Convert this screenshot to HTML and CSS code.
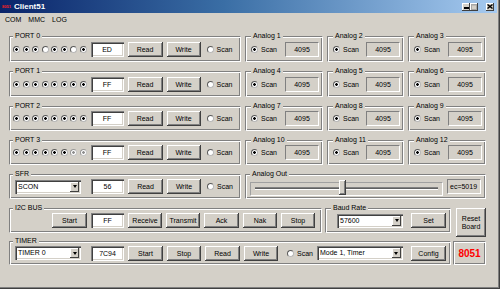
FILE: index.html
```html
<!DOCTYPE html>
<html lang="en">
<head>
  <meta charset="UTF-8">
  <title>Client51</title>
  <link rel="stylesheet" href="styles.css">
</head>
<body>
  <div class="window">
    <!-- Title bar -->
    <div class="titlebar">
      <span class="app-icon">8051</span>
      <span class="title">Client51</span>
      <div class="caption-buttons">
        <span class="cap-btn min"><svg width="5" height="2"><rect width="5" height="2" fill="#000"/></svg></span>
        <span class="cap-btn"><svg width="6" height="6"><rect x="0.5" y="0.5" width="5" height="5" fill="none" stroke="#a8a8a8"/><rect x="0" y="0" width="6" height="1.5" fill="#a8a8a8"/></svg></span>
        <span class="cap-btn close"><svg width="6" height="5"><path d="M0.5 0.5L5.5 4.5M5.5 0.5L0.5 4.5" stroke="#000" stroke-width="1.4"/></svg></span>
      </div>
    </div>

    <!-- Menu -->
    <div class="menubar">
      <span>COM</span>
      <span>MMC</span>
      <span>LOG</span>
    </div>

    <div class="client">
      <!-- PORT 0 -->
      <div class="row h26">
        <div class="group port">
          <div class="legend">PORT 0</div>
          <div class="controls">
            <div class="bits">
              <span class="radio on"></span><span class="radio on"></span><span class="radio on"></span><span class="radio"></span>
              <span class="radio on"></span><span class="radio on"></span><span class="radio"></span><span class="radio on"></span>
            </div>
            <span class="edit">ED</span>
            <button class="btn w35">Read</button>
            <button class="btn w34">Write</button>
            <span class="scan"><span class="radio"></span>Scan</span>
          </div>
        </div>
        <div class="group analog w78">
          <div class="legend">Analog 1</div>
          <div class="controls">
            <span class="scan"><span class="radio on"></span>Scan</span>
            <span class="value">4095</span>
          </div>
        </div>
        <div class="group analog w77">
          <div class="legend">Analog 2</div>
          <div class="controls">
            <span class="scan"><span class="radio on"></span>Scan</span>
            <span class="value">4095</span>
          </div>
        </div>
        <div class="group analog w78">
          <div class="legend">Analog 3</div>
          <div class="controls">
            <span class="scan"><span class="radio on"></span>Scan</span>
            <span class="value">4095</span>
          </div>
        </div>
      </div>

      <!-- PORT 1 -->
      <div class="row h26">
        <div class="group port">
          <div class="legend">PORT 1</div>
          <div class="controls">
            <div class="bits">
              <span class="radio on"></span><span class="radio on"></span><span class="radio on"></span><span class="radio on"></span>
              <span class="radio on"></span><span class="radio on"></span><span class="radio on"></span><span class="radio on"></span>
            </div>
            <span class="edit">FF</span>
            <button class="btn w35">Read</button>
            <button class="btn w34">Write</button>
            <span class="scan"><span class="radio"></span>Scan</span>
          </div>
        </div>
        <div class="group analog w78">
          <div class="legend">Analog 4</div>
          <div class="controls">
            <span class="scan"><span class="radio on"></span>Scan</span>
            <span class="value">4095</span>
          </div>
        </div>
        <div class="group analog w77">
          <div class="legend">Analog 5</div>
          <div class="controls">
            <span class="scan"><span class="radio on"></span>Scan</span>
            <span class="value">4095</span>
          </div>
        </div>
        <div class="group analog w78">
          <div class="legend">Analog 6</div>
          <div class="controls">
            <span class="scan"><span class="radio on"></span>Scan</span>
            <span class="value">4095</span>
          </div>
        </div>
      </div>

      <!-- PORT 2 -->
      <div class="row h25">
        <div class="group port">
          <div class="legend">PORT 2</div>
          <div class="controls">
            <div class="bits">
              <span class="radio on"></span><span class="radio on"></span><span class="radio on"></span><span class="radio on"></span>
              <span class="radio on"></span><span class="radio on"></span><span class="radio on"></span><span class="radio on"></span>
            </div>
            <span class="edit">FF</span>
            <button class="btn w35">Read</button>
            <button class="btn w34">Write</button>
            <span class="scan"><span class="radio"></span>Scan</span>
          </div>
        </div>
        <div class="group analog w78">
          <div class="legend">Analog 7</div>
          <div class="controls">
            <span class="scan"><span class="radio on"></span>Scan</span>
            <span class="value">4095</span>
          </div>
        </div>
        <div class="group analog w77">
          <div class="legend">Analog 8</div>
          <div class="controls">
            <span class="scan"><span class="radio on"></span>Scan</span>
            <span class="value">4095</span>
          </div>
        </div>
        <div class="group analog w78">
          <div class="legend">Analog 9</div>
          <div class="controls">
            <span class="scan"><span class="radio on"></span>Scan</span>
            <span class="value">4095</span>
          </div>
        </div>
      </div>

      <!-- PORT 3 -->
      <div class="row h25">
        <div class="group port">
          <div class="legend">PORT 3</div>
          <div class="controls">
            <div class="bits">
              <span class="radio on"></span><span class="radio on"></span><span class="radio on"></span><span class="radio on"></span>
              <span class="radio on"></span><span class="radio on"></span><span class="radio on dim"></span><span class="radio on dim"></span>
            </div>
            <span class="edit">FF</span>
            <button class="btn w35">Read</button>
            <button class="btn w34">Write</button>
            <span class="scan"><span class="radio"></span>Scan</span>
          </div>
        </div>
        <div class="group analog w78">
          <div class="legend">Analog 10</div>
          <div class="controls">
            <span class="scan"><span class="radio on"></span>Scan</span>
            <span class="value">4095</span>
          </div>
        </div>
        <div class="group analog w77">
          <div class="legend">Analog 11</div>
          <div class="controls">
            <span class="scan"><span class="radio on"></span>Scan</span>
            <span class="value">4095</span>
          </div>
        </div>
        <div class="group analog w78">
          <div class="legend">Analog 12</div>
          <div class="controls">
            <span class="scan"><span class="radio on"></span>Scan</span>
            <span class="value">4095</span>
          </div>
        </div>
      </div>

      <!-- SFR + analog out -->
      <div class="row h25">
        <div class="group port">
          <div class="legend">SFR</div>
          <div class="controls">
            <div class="combo w66 first"><span class="combo-text">SCON</span><span class="combo-btn"></span></div>
            <span class="edit">56</span>
            <button class="btn w35">Read</button>
            <button class="btn w34">Write</button>
            <span class="scan"><span class="radio"></span>Scan</span>
          </div>
        </div>
        <div class="group analog-out">
          <div class="legend">Analog Out</div>
          <div class="controls">
            <div class="slider">
              <span class="track"></span>
              <span class="thumb" style="left: 46%"></span>
            </div>
            <span class="value left">ec=5019</span>
          </div>
        </div>
      </div>

      <!-- I2C + baud -->
      <div class="row h25">
        <div class="group i2c">
          <div class="legend">I2C BUS</div>
          <div class="controls">
            <button class="btn w35 start">Start</button>
            <span class="edit">FF</span>
            <button class="btn w34">Receive</button>
            <button class="btn w34">Transmit</button>
            <button class="btn w35">Ack</button>
            <button class="btn w34">Nak</button>
            <button class="btn w34">Stop</button>
          </div>
        </div>
        <div class="group baud">
          <div class="legend">Baud Rate</div>
          <div class="controls">
            <div class="combo w66 indent"><span class="combo-text">57600</span><span class="combo-btn"></span></div>
            <button class="btn w35 set">Set</button>
          </div>
        </div>
        <button class="btn reset">Reset<br>Board</button>
      </div>

      <!-- Timer -->
      <div class="row h24 last">
        <div class="group timer">
          <div class="legend">TIMER</div>
          <div class="controls">
            <div class="combo w66 first"><span class="combo-text">TIMER 0</span><span class="combo-btn"></span></div>
            <span class="edit">7C94</span>
            <button class="btn w35">Start</button>
            <button class="btn w34">Stop</button>
            <button class="btn w35">Read</button>
            <button class="btn w34">Write</button>
            <span class="scan wide"><span class="radio"></span>Scan</span>
            <div class="combo w86"><span class="combo-text">Mode 1, Timer</span><span class="combo-btn"></span></div>
            <button class="btn w35 set">Config</button>
          </div>
        </div>
        <div class="chip">8051</div>
      </div>
    </div>
  </div>
</body>
</html>
```

FILE: styles.css
```css
/* Reset */
* {
  margin: 0;
  padding: 0;
  box-sizing: border-box;
}

body {
  background: #d4d0c8;
  font-family: "Liberation Sans", Arial, sans-serif;
  font-size: 7px;
  color: #000;
}

/* Window frame */
.window {
  width: 500px;
  height: 289px;
  padding: 0 3px 3px 0;
  background: #d4d0c8;
  box-shadow: inset -1px -1px #404040, inset -2px -2px #808080;
  display: flex;
  flex-direction: column;
  overflow: hidden;
}

.titlebar {
  height: 13px;
  display: flex;
  align-items: center;
  padding: 0 3px 0 2px;
  background: linear-gradient(to right, #0a246a, #3a6ea5 45%, #a6caf0);
  color: #fff;
}

.app-icon {
  width: 11px;
  font-size: 4px;
  font-weight: bold;
  color: #ff2020;
}

.title {
  margin-left: 1px;
  font-size: 8px;
  font-weight: bold;
}

.caption-buttons {
  margin-left: auto;
  display: flex;
}

.cap-btn {
  width: 8px;
  height: 8px;
  display: flex;
  align-items: center;
  justify-content: center;
  background: #d4d0c8;
  box-shadow: inset -1px -1px #404040, inset 1px 1px #fff;
}

.cap-btn.min {
  align-items: flex-end;
  padding-bottom: 2px;
}

.cap-btn.close {
  margin-left: 8px;
}

.menubar {
  height: 12px;
  display: flex;
  align-items: center;
  gap: 7px;
  padding-left: 5px;
}

/* Client area */
.client {
  padding: 11px 0 0 9px;
  display: flex;
  flex-direction: column;
  gap: 9px;
}

.row {
  display: flex;
  gap: 4px;
}

.row.h26 { height: 26px; }
.row.h25 { height: 25px; }
.row.h24 { height: 24px; }
.row.last { margin-top: -1px; }

/* Etched group box */
.group {
  display: flex;
  flex-direction: column;
  border: 1px solid #808080;
  border-right-color: #fff;
  border-bottom-color: #fff;
  box-shadow: inset 1px 1px #fff, inset -1px -1px #808080;
  padding: 0 3px;
}

.legend {
  align-self: flex-start;
  margin: -5px 0 -3px;
  padding: 0 2px;
  line-height: 8px;
  background: #d4d0c8;
  white-space: nowrap;
}

.controls {
  flex: 1;
  display: flex;
  align-items: center;
  gap: 4px;
}

.port { width: 232px; }
.analog { padding: 0 3px 0 5px; }
.w78 { width: 78px; }
.w77 { width: 77px; }
.analog-out { width: 241px; padding: 0 4px; }
.i2c { width: 313px; }
.baud { width: 126px; margin-left: -1px; padding-left: 5px; }
.timer { width: 442px; }

/* Controls */
.btn {
  flex: none;
  height: 15px;
  font: inherit;
  color: #000;
  background: #d4d0c8;
  border: none;
  box-shadow: inset -1px -1px #404040, inset 1px 1px #fff, inset -2px -2px #808080;
}

.btn.w35 { width: 35px; }
.btn.w34 { width: 34px; }
.btn.start { margin-left: 39px; }
.btn.set { margin-left: 4px; }

.btn.reset {
  width: 30px;
  height: 29px;
  margin-left: 1px;
  line-height: 8px;
}

.edit {
  flex: none;
  width: 33px;
  height: 15px;
  display: flex;
  align-items: center;
  justify-content: center;
  background: #fff;
  box-shadow: inset 1px 1px #808080, inset 2px 2px #404040, inset -1px -1px #fff, inset -2px -2px #d4d0c8;
}

.value {
  flex: none;
  width: 34px;
  height: 15px;
  margin-left: auto;
  display: flex;
  align-items: center;
  justify-content: center;
  border: 1px solid;
  border-color: #808080 #fff #fff #808080;
}

.value.left {
  justify-content: flex-start;
  padding-left: 2px;
}

.bits {
  display: flex;
  gap: 2.5px;
}

.radio {
  flex: none;
  width: 7px;
  height: 7px;
  border-radius: 50%;
  background: #fff;
  border: 1px solid;
  border-color: #5a5a5a #b8b8b8 #b8b8b8 #5a5a5a;
}

.radio.on {
  background: radial-gradient(circle, #000 0 1px, #fff 1.6px);
}

.radio.on.dim {
  border-color: #9a9a9a #c8c8c8 #c8c8c8 #9a9a9a;
  background: radial-gradient(circle, #909090 0 1px, #fff 1.6px);
}

.scan {
  display: flex;
  align-items: center;
  gap: 3px;
  margin-left: 2px;
}

.analog .scan { margin-left: 0; }
.scan.wide { margin-left: 5px; }

/* Combo box */
.combo {
  flex: none;
  height: 14px;
  display: flex;
  align-items: stretch;
  padding: 2px;
  background: #fff;
  box-shadow: inset 1px 1px #808080, inset 2px 2px #404040, inset -1px -1px #fff, inset -2px -2px #d4d0c8;
}

.combo.w66 { width: 66px; }
.combo.w86 { width: 86px; }
.combo.first { margin-left: 2px; margin-right: 6px; }
.combo.indent { margin-left: 6px; }

.combo-text {
  flex: 1;
  padding-left: 1px;
  line-height: 10px;
  white-space: nowrap;
  overflow: hidden;
}

.combo-btn {
  width: 9px;
  display: flex;
  align-items: center;
  justify-content: center;
  background: #d4d0c8;
  box-shadow: inset -1px -1px #404040, inset 1px 1px #fff;
}

.combo-btn::after {
  content: "";
  border-top: 3px solid #000;
  border-left: 2.5px solid transparent;
  border-right: 2.5px solid transparent;
}

/* Trackbar */
.slider {
  flex: none;
  position: relative;
  width: 193px;
  height: 14px;
  margin-top: 4px;
  padding: 0 4px;
  display: flex;
  align-items: center;
  border: 1px solid;
  border-color: #a0a0a0 #fff #fff #a0a0a0;
}

.track {
  flex: 1;
  height: 3px;
  border-top: 1px solid #808080;
  border-bottom: 1px solid #fff;
  background: #606060;
}

.thumb {
  position: absolute;
  top: -3px;
  width: 7px;
  height: 15px;
  background: #d4d0c8;
  box-shadow: inset -1px -1px #404040, inset 1px 1px #fff, inset -2px -2px #808080;
}

/* 8051 badge */
.chip {
  width: 33px;
  margin-left: -2px;
  display: flex;
  align-items: center;
  justify-content: center;
  border: 1px solid #808080;
  border-right-color: #fff;
  border-bottom-color: #fff;
  box-shadow: inset 1px 1px #fff, inset -1px -1px #808080;
  color: #ff0000;
  font-size: 10px;
  font-weight: bold;
}
```
